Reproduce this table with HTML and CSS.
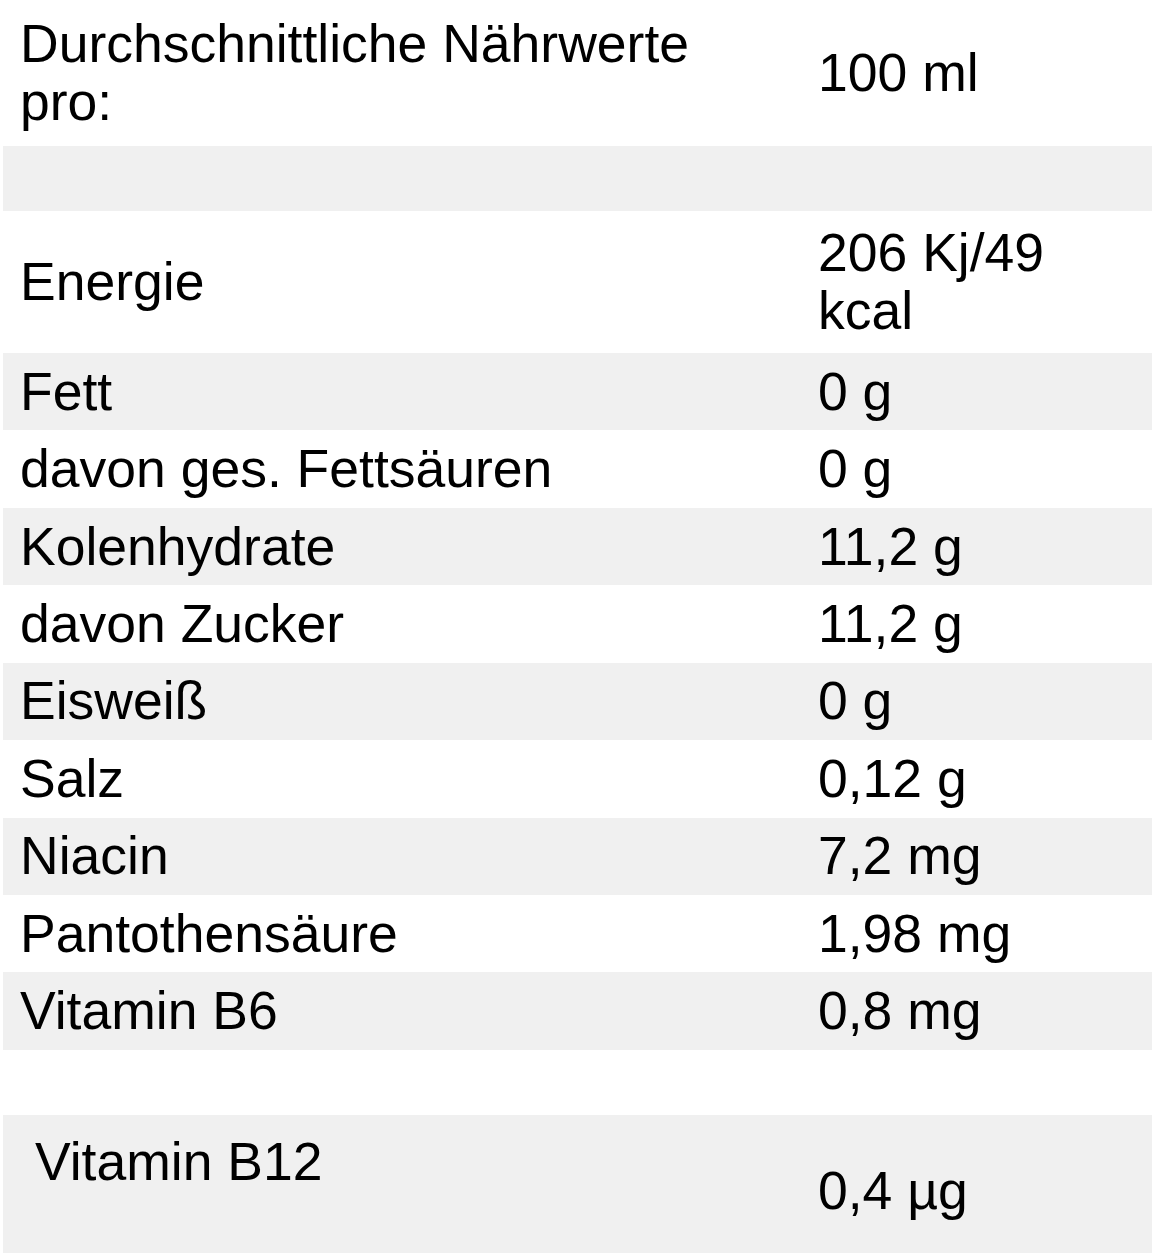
FILE: index.html
```html
<!DOCTYPE html>
<html lang="de">
<head>
<meta charset="utf-8">
<title>Nährwerte</title>
<link rel="stylesheet" href="styles.css">
</head>
<body>
<table class="nutrition">
  <colgroup>
    <col class="col-name">
    <col class="col-value">
  </colgroup>
  <tbody>
    <tr class="row-head">
      <td>Durchschnittliche Nährwerte pro:</td>
      <td>100 ml</td>
    </tr>
    <tr class="row-empty"><td></td><td></td></tr>
    <tr class="row-tall">
      <td>Energie</td>
      <td>206 Kj/49 kcal</td>
    </tr>
    <tr><td>Fett</td><td>0 g</td></tr>
    <tr><td>davon ges. Fettsäuren</td><td>0 g</td></tr>
    <tr><td>Kolenhydrate</td><td>11,2 g</td></tr>
    <tr><td>davon Zucker</td><td>11,2 g</td></tr>
    <tr><td>Eisweiß</td><td>0 g</td></tr>
    <tr><td>Salz</td><td>0,12 g</td></tr>
    <tr><td>Niacin</td><td>7,2 mg</td></tr>
    <tr><td>Pantothensäure</td><td>1,98 mg</td></tr>
    <tr><td>Vitamin B6</td><td>0,8 mg</td></tr>
    <tr class="row-empty"><td></td><td></td></tr>
    <tr class="row-last">
      <td class="cell-indent">Vitamin B12</td>
      <td class="cell-low">0,4 µg</td>
    </tr>
  </tbody>
</table>
</body>
</html>
```

FILE: styles.css
```css
html, body {
  margin: 0;
  padding: 0;
  background: #ffffff;
}

body {
  overflow: hidden;
}

.nutrition {
  margin-left: 3px;
  width: 1149px;
  table-layout: fixed;
  border-collapse: collapse;
  border-spacing: 0;
  font-family: "Liberation Sans", Arial, sans-serif;
  font-size: 53.5px;
  line-height: 58px;
  color: #000000;
}

.col-name {
  width: 798px;
}

.col-value {
  width: 351px;
}

.nutrition td {
  padding: 9.72px 17px;
  vertical-align: middle;
  text-align: left;
}

.nutrition tr:nth-child(even) {
  background: #f0f0f0;
}

.row-head td {
  padding-top: 14.6px;
  padding-bottom: 15.4px;
}

.row-empty td {
  height: 65px;
  padding: 0;
  box-sizing: border-box;
}

.row-tall td {
  padding-top: 13px;
  padding-bottom: 13px;
}

.row-last td {
  height: 138px;
  box-sizing: border-box;
  vertical-align: top;
  padding-bottom: 0;
}

.row-last .cell-indent {
  padding-top: 17.6px;
  padding-left: 32px;
}

.row-last .cell-low {
  padding-top: 47px;
}
```
